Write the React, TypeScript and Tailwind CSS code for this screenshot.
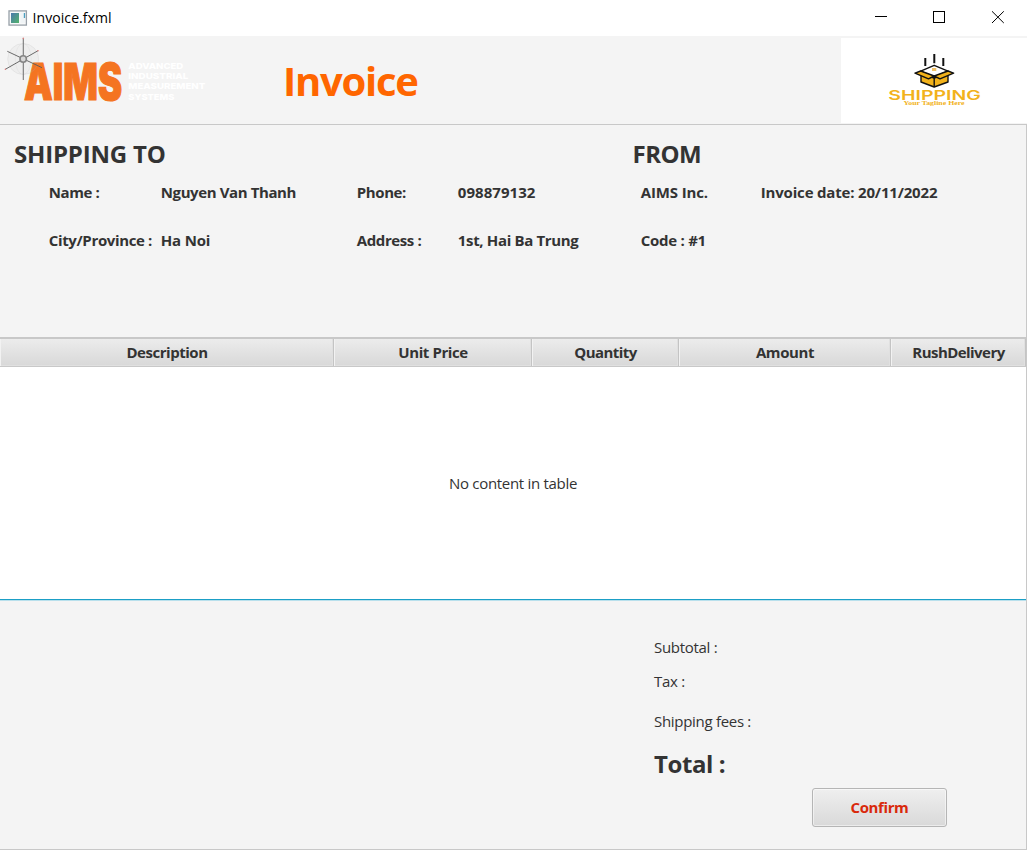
function WindowIcon() {
  return (
    <svg width="20" height="16" viewBox="0 0 20 16" className="shrink-0">
      <defs>
        <linearGradient id="pane" x1="0" y1="0" x2="1" y2="1">
          <stop offset="0" stopColor="#4a78ad" />
          <stop offset="1" stopColor="#52b36b" />
        </linearGradient>
      </defs>
      <rect x="1" y="0.9" width="17.4" height="14.2" fill="#f7f8f9" stroke="#98a0a8" strokeWidth="1.3" />
      <rect x="3" y="3" width="8" height="10" fill="url(#pane)" />
      <rect x="12.5" y="3" width="4.5" height="10" fill="#f0f4f6" />
      <rect x="15.8" y="3" width="1.3" height="5" fill="#4a9fc0" />
    </svg>
  );
}

function AimsLogo() {
  return (
    <svg width="210" height="88" viewBox="0 36 210 88" className="shrink-0">
      <text
        x="24"
        y="99.8"
        textLength="98"
        lengthAdjust="spacingAndGlyphs"
        fill="#f47421"
        stroke="#f47421"
        strokeWidth="1.2"
        className="font-['Inter'] text-[50.5px] leading-none font-black"
      >
        AIMS
      </text>
      <g fill="#ffffff" className="font-['Inter'] text-[8.2px] leading-none font-extrabold">
        <text x="128.3" y="69.2" textLength="55" lengthAdjust="spacingAndGlyphs">ADVANCED</text>
        <text x="128.3" y="79.3" textLength="60" lengthAdjust="spacingAndGlyphs">INDUSTRIAL</text>
        <text x="128.3" y="89.4" textLength="77" lengthAdjust="spacingAndGlyphs">MEASUREMENT</text>
        <text x="128.3" y="99.5" textLength="46" lengthAdjust="spacingAndGlyphs">SYSTEMS</text>
      </g>
      <circle cx="23.2" cy="59" r="15.5" fill="#8a8a8a" fillOpacity="0.05" stroke="#bbbbbb" strokeOpacity="0.4" strokeWidth="0.5" />
      <ellipse cx="23.2" cy="59" rx="8" ry="15.5" fill="none" stroke="#bbbbbb" strokeOpacity="0.3" strokeWidth="0.5" />
      <g stroke="#5a5a5a" strokeWidth="0.9">
        <path d="M23.3 38.5V80" stroke="#777777" strokeWidth="1.1" />
        <path d="M7.3 51.3L42 67.7" />
        <path d="M38 50.7L5.3 69.3" />
      </g>
      <g fill="#d98080">
        <circle cx="23.3" cy="38.4" r="0.8" />
        <circle cx="38" cy="50.7" r="0.8" />
        <circle cx="5.4" cy="69.3" r="0.8" />
      </g>
      <circle cx="23.2" cy="59" r="4" fill="#858585" />
      <circle cx="23.2" cy="59" r="2.4" fill="#d8d8d8" />
    </svg>
  );
}

function ShippingLogo() {
  return (
    <svg width="186" height="85" viewBox="841 38 186 85">
      <g stroke="#111111" strokeWidth="2">
        <path d="M925.3 58v8M934.3 54v9.3M943.3 58v8" />
      </g>
      <g stroke="#111111" strokeWidth="1.4" strokeLinejoin="round">
        <path d="M921 73.5V82L934.2 87L948 82V73.5L934.2 78Z" fill="#f2b21b" />
        <path d="M934.2 65.3L948 71.2L934.2 77L920.7 71.2Z" fill="#ffffff" />
        <path d="M920.7 71L915 73.2L928.5 78.8L934.2 76Z" fill="#f2b21b" />
        <path d="M948 71L953.6 73.2L940 78.8L934.2 76Z" fill="#f2b21b" />
        <path d="M934.2 76V87" />
      </g>
      <rect x="932" y="68" width="4.3" height="3" fill="#f2c268" />
      <text
        x="888.3"
        y="99.6"
        textLength="92.5"
        lengthAdjust="spacingAndGlyphs"
        fill="#f2b21b"
        className="font-['Inter'] text-[13px] leading-none font-semibold"
      >
        SHIPPING
      </text>
      <text
        x="903.5"
        y="105.3"
        textLength="61"
        lengthAdjust="spacingAndGlyphs"
        fill="#f2b21b"
        className="font-['Liberation_Serif'] text-[5.5px] leading-none font-bold"
      >
        Your Tagline Here
      </text>
    </svg>
  );
}

function TitleBar() {
  return (
    <div className="flex h-9 shrink-0 items-center bg-white pl-[7.5px]">
      <WindowIcon />
      <span className="ml-[5px] flex-1 text-[14px] leading-5 tracking-[0.08px] text-black">Invoice.fxml</span>
      <svg width="152" height="36" viewBox="875 0 152 36" fill="none" stroke="#000000" strokeWidth="1">
        <path d="M875 16.5H887" />
        <rect x="933.5" y="11.5" width="11" height="11" />
        <path d="M992 11.3L1003.8 23M1003.8 11.3L992 23" />
      </svg>
    </div>
  );
}

const columns = [
  { label: "Description", width: "w-[334px]", tracking: "tracking-[-0.46px]" },
  { label: "Unit Price", width: "w-[198px]", tracking: "tracking-[-0.42px]" },
  { label: "Quantity", width: "w-[147px]", tracking: "tracking-[-0.55px]" },
  { label: "Amount", width: "w-[212px]", tracking: "tracking-[-0.4px]" },
  { label: "RushDelivery", width: "w-[135px]", tracking: "tracking-[-0.55px]" },
];

export default function App() {
  return (
    <div className="flex h-[850px] w-[1027px] flex-col overflow-hidden bg-[#f4f4f4] font-['Open_Sans',sans-serif] text-[15px] leading-5 text-[#333333]">
      <TitleBar />
      <header className="flex h-[88px] shrink-0">
        <AimsLogo />
        <h1 className="flex-1 pt-5 pl-[73px] text-[40px] leading-[50px] font-bold tracking-[-1.25px] text-[#ff6600]">
          Invoice
        </h1>
        <div className="mt-0.5 h-[85px] w-[186px] bg-white">
          <ShippingLogo />
        </div>
      </header>

      <div className="flex min-h-0 flex-1 flex-col border-t border-r border-b border-[#c8c8c8]">
        <section className="h-[212px] shrink-0">
          <div className="grid grid-cols-[618.5px_1fr] pt-[14px] pl-[14px] text-2xl leading-[30px] font-bold">
            <h2 className="tracking-[-0.2px]">SHIPPING TO</h2>
            <h2 className="tracking-[-0.5px]">FROM</h2>
          </div>
          <div className="mt-[13px] grid grid-cols-[112px_196px_101px_183px_120px_1fr] gap-y-7 pl-[48.8px] font-bold tracking-[-0.4px] whitespace-nowrap">
            <span>Name :</span>
            <span>Nguyen Van Thanh</span>
            <span>Phone:</span>
            <span className="tracking-[0.05px]">098879132</span>
            <span className="tracking-[-0.15px]">AIMS Inc.</span>
            <span className="tracking-[-0.18px]">Invoice date: 20/11/2022</span>
            <span className="tracking-[-0.36px]">City/Province :</span>
            <span className="tracking-[-0.2px]">Ha Noi</span>
            <span>Address :</span>
            <span className="tracking-[-0.34px]">1st, Hai Ba Trung</span>
            <span className="tracking-[-0.27px]">Code : #1</span>
          </div>
        </section>

        <section className="flex h-[264px] shrink-0 flex-col border-t-2 border-[#c8c8c8] bg-white">
          <div className="flex h-7 shrink-0 border-b border-[#c8c8c8]">
            {columns.map((c) => (
              <div
                key={c.label}
                className={`${c.width} ${c.tracking} flex items-center justify-center border-r border-[#c4c4c4] bg-linear-to-b from-[#ececec] to-[#d8d8d8] pb-px pl-px font-bold shadow-[inset_1px_0_0_#f2f2f2,inset_-1px_-1px_0_#e0e0e0]`}
              >
                {c.label}
              </div>
            ))}
          </div>
          <div className="flex flex-1 items-center justify-center tracking-[-0.3px]">No content in table</div>
          <div className="h-px bg-[#1b9fc6]" />
          <div className="h-px bg-[#b9e0ec]" />
        </section>

        <section className="flex flex-1 flex-col pt-9 pl-[654px] tracking-[-0.3px]">
          <div>Subtotal :</div>
          <div className="mt-[14px]">Tax :</div>
          <div className="mt-5">Shipping fees :</div>
          <div className="mt-[18px] text-2xl leading-[30px] font-bold tracking-[-0.4px]">Total :</div>
          <button className="mt-[9px] ml-[158px] h-[39px] w-[135px] rounded-[3px] border border-[#b5b5b5] bg-linear-to-b from-[#efefef] to-[#d9d9d9] pb-0.5 font-bold tracking-[-0.4px] text-[#d9290b] shadow-[inset_0_0_0_1px_rgba(255,255,255,0.5)]">
            Confirm
          </button>
        </section>
      </div>
    </div>
  );
}
